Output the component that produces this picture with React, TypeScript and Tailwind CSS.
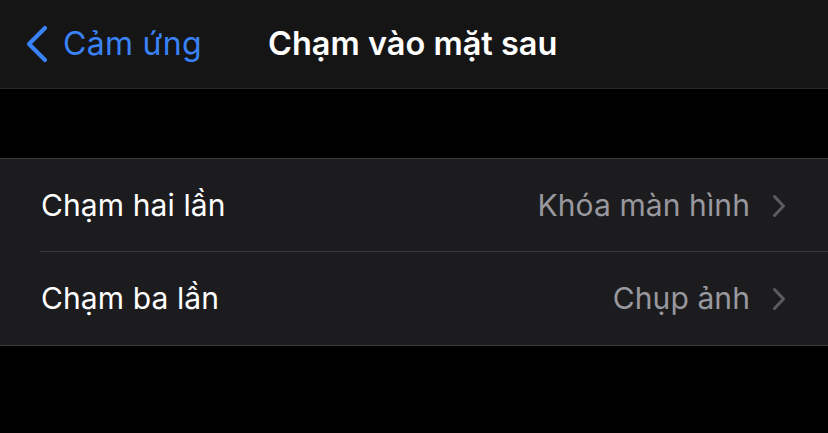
import React from "react";

const Chevron = () => (
  <svg width="14" height="24" viewBox="0 0 14 24" fill="none" className="shrink-0">
    <path d="M2.5 2.5 L11.5 12 L2.5 21.5" stroke="#5b5b60" strokeWidth="3" strokeLinecap="round" strokeLinejoin="round" />
  </svg>
);

const Row = ({ label, value, sep }: { label: string; value: string; sep?: boolean }) => (
  <div className="relative flex h-[93px] items-center pl-[41px] pr-[42px]">
    <span className="text-[30px] text-white tracking-[0.1px]">{label}</span>
    <span className="ml-auto mr-[22px] text-[30px] text-[#98989e] tracking-[0.1px]">{value}</span>
    <Chevron />
    {sep && <div className="absolute bottom-0 left-[40px] right-0 h-px bg-[#38383a]" />}
  </div>
);

export default function App() {
  return (
    <div className="w-[828px] h-[433px] bg-black overflow-hidden" style={{ fontFamily: "Inter, 'Noto Sans', sans-serif" }}>
      <div className="h-[89px] bg-[#151515] border-b border-[#2a2a2c] flex items-center">
        <div className="flex items-center pl-[25px] w-[268px]">
          <svg width="24" height="38" viewBox="0 0 24 38" fill="none">
            <path d="M20 3 L4 19 L20 35" stroke="#3a82f7" strokeWidth="4.2" strokeLinecap="round" strokeLinejoin="round" />
          </svg>
          <span className="ml-[14px] text-[32px] text-[#3a82f7] tracking-[0.3px]">Cảm ứng</span>
        </div>
        <span className="text-[32.5px] font-semibold text-white">Chạm vào mặt sau</span>
      </div>
      <div className="h-[69px]" />
      <div className="bg-[#1c1c1e] border-y border-[#38383a]">
        <Row label="Chạm hai lần" value="Khóa màn hình" sep />
        <Row label="Chạm ba lần" value="Chụp ảnh" />
      </div>
    </div>
  );
}
